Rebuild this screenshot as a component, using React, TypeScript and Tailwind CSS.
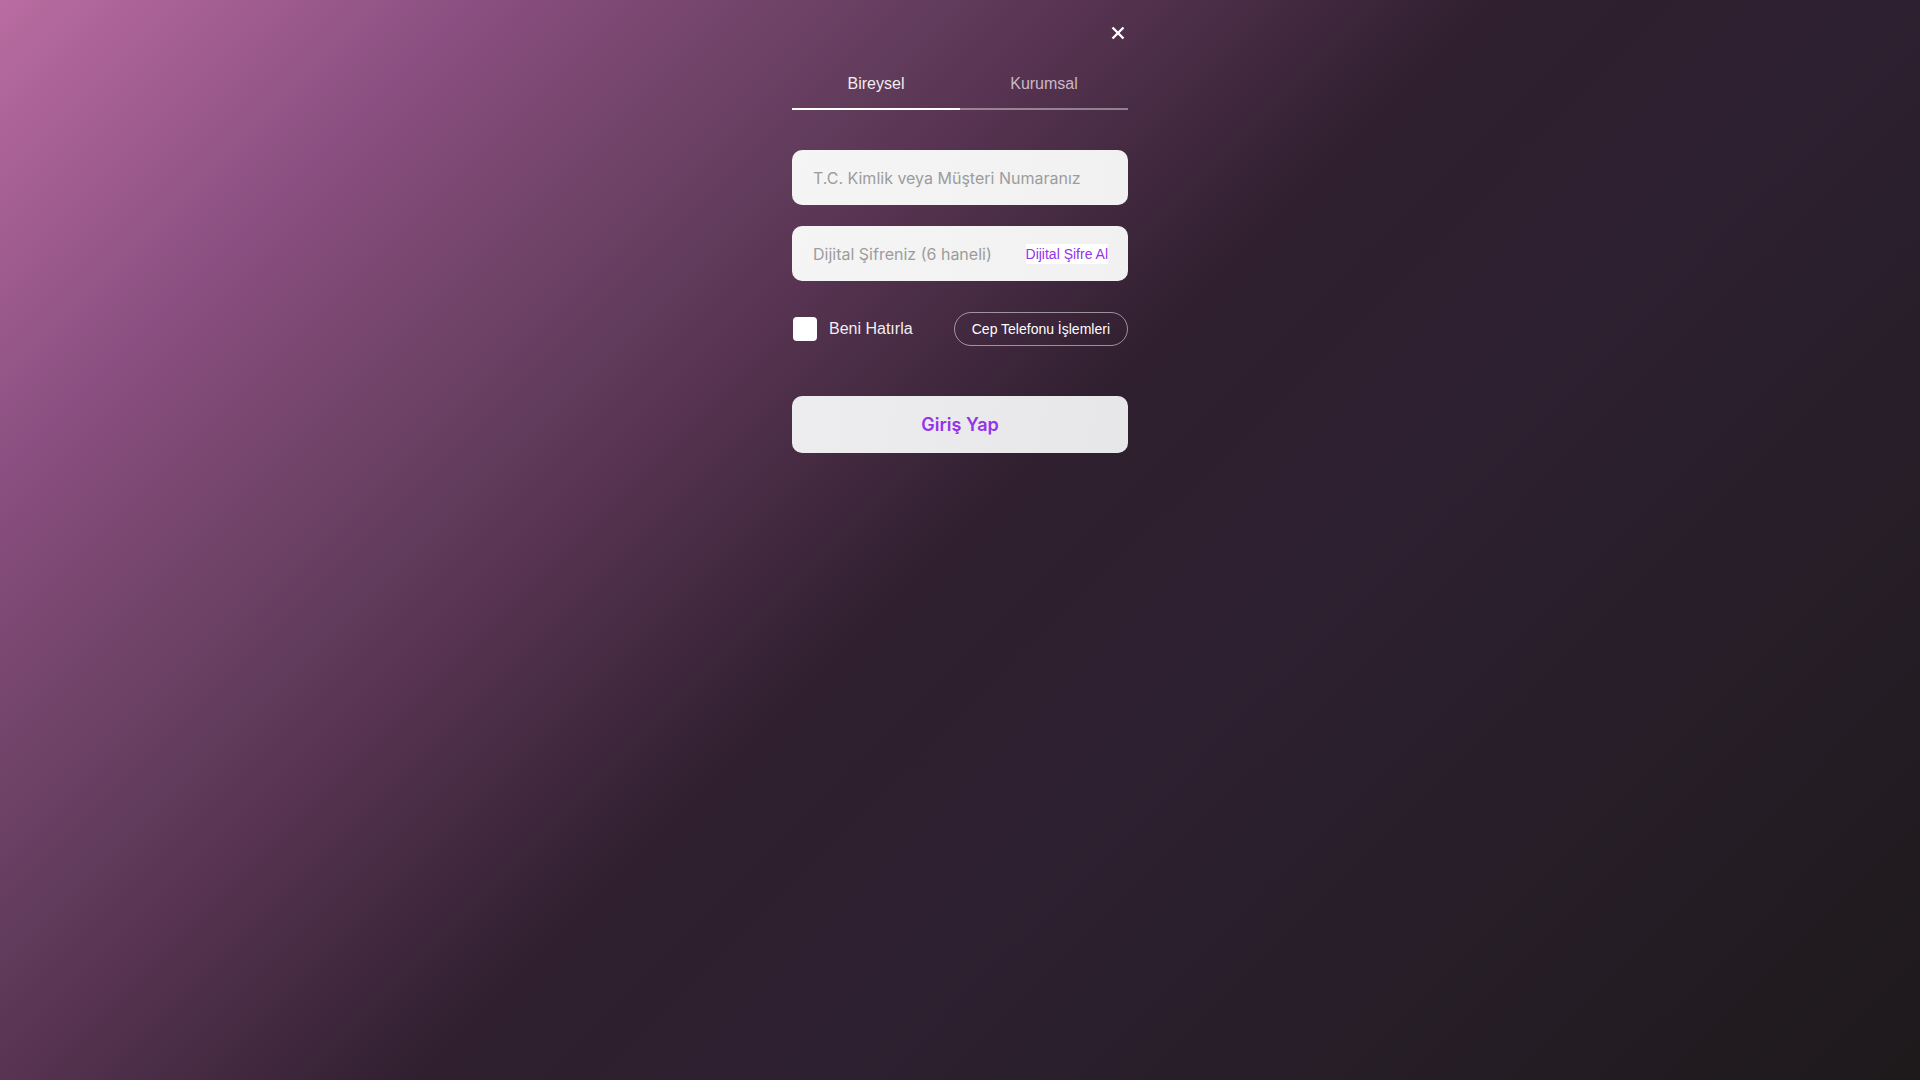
import React from "react";

export default function App() {
  return (
    <div className="min-h-screen w-full bg-[linear-gradient(135deg,#b96ca1_0%,#8a4f80_16%,#5e3a58_33%,#583452_36%,#2f1f2f_50%,#2d2030_64%,#1e1a1c_100%)] font-['Liberation_Sans',Arial,sans-serif]">
      <div className="mx-auto w-[336px]">
        <div className="flex justify-end pt-[23px]">
          <button className="flex h-5 w-5 items-center justify-center text-white" aria-label="Kapat">
            <svg width="14" height="14" viewBox="0 0 14 14" fill="none">
              <path d="M1.5 1.5L12.5 12.5M12.5 1.5L1.5 12.5" stroke="white" strokeWidth="2.4" strokeLinecap="butt" />
            </svg>
          </button>
        </div>

        <div className="mt-[15px] flex">
          <button className="flex-1 border-b-2 border-white pt-[14px] pb-[12px] text-[16px] leading-6 text-[#f2ecf1]">
            Bireysel
          </button>
          <button className="flex-1 border-b-2 border-white/40 pt-[14px] pb-[12px] text-[16px] leading-6 text-[#c9b9c6]">
            Kurumsal
          </button>
        </div>

        <div className="mt-[40px] flex h-[55px] items-center rounded-[10px] bg-[linear-gradient(100deg,#f5f5f6,#f1f1f1)] pl-[21px] pr-5">
          <input
            className="w-full bg-transparent font-['Inter',sans-serif] text-[16px] text-gray-800 outline-none placeholder:text-[#9c9c9c]"
            placeholder="T.C. Kimlik veya Müşteri Numaranız"
          />
        </div>

        <div className="mt-[21px] flex h-[55px] items-center rounded-[10px] bg-[linear-gradient(100deg,#f5f5f6,#f1f1f1)] pl-[21px] pr-5">
          <input
            className="min-w-0 flex-1 bg-transparent font-['Inter',sans-serif] text-[16px] text-gray-800 outline-none placeholder:text-[#9c9c9c]"
            placeholder="Dijital Şifreniz (6 haneli)"
          />
          <button className="h-5 bg-white text-[14px] leading-5 text-[#9333ea]">Dijital Şifre Al</button>
        </div>

        <div className="mt-[31px] flex h-[34px] items-center justify-between">
          <label className="ml-px flex items-center">
            <span className="h-6 w-6 rounded-[4px] bg-white" />
            <span className="ml-3 text-[16px] text-[#f3ecf2]">Beni Hatırla</span>
          </label>
          <button className="h-[34px] rounded-full border border-white/50 px-[17px] text-[14px] text-white">
            Cep Telefonu İşlemleri
          </button>
        </div>

        <button className="mt-[50px] flex h-[57px] w-full items-center justify-center rounded-[10px] bg-[linear-gradient(100deg,#edecee,#e7e6e8)] font-['Inter',sans-serif] text-[18px] font-semibold text-[#9333ea]">
          Giriş Yap
        </button>
      </div>
    </div>
  );
}
